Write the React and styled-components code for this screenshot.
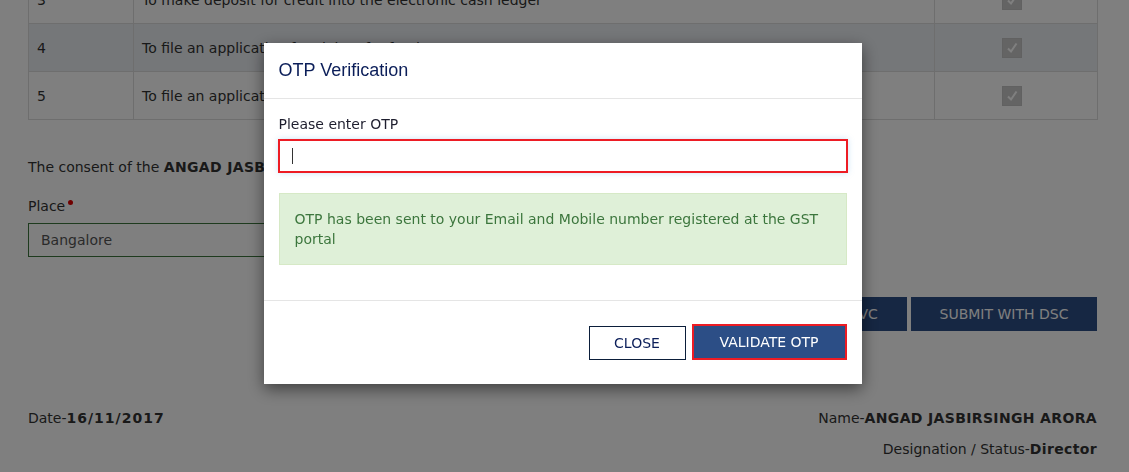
import styled, { createGlobalStyle } from 'styled-components';

const GlobalStyle = createGlobalStyle`
  html, body {
    margin: 0;
    padding: 0;
    background: #fff;
    overflow: hidden;
  }
  body {
    font-family: "DejaVu Sans", Verdana, sans-serif;
    font-size: 14px;
    line-height: 20px;
    color: #333;
  }
`;

const purposes = [
  { id: 3, text: 'To make deposit for credit into the electronic cash ledger' },
  { id: 4, text: 'To file an application for claim of refund', shaded: true },
  { id: 5, text: 'To file an application for cancellation of registration' },
];

const Checked = () => (
  <svg width="20" height="20" viewBox="0 0 20 20">
    <rect x="0.5" y="0.5" width="19" height="19" fill="#c9c9c9" stroke="#c2c2c2" />
    <path d="M6 10.5 L9 13.5 L14.5 5.5" fill="none" stroke="#fff" strokeWidth="2" />
  </svg>
);

const App = () => {
  return (
    <>
      <GlobalStyle />
      <Page>
        <Table>
          <colgroup>
            <col style={{ width: 105 }} />
            <col style={{ width: 801 }} />
            <col style={{ width: 163 }} />
          </colgroup>
          <tbody>
            {purposes.map((p) => (
              <Row key={p.id} $shaded={p.shaded}>
                <Cell>{p.id}</Cell>
                <Cell>{p.text}</Cell>
                <CheckCell>
                  <Checked />
                </CheckCell>
              </Row>
            ))}
          </tbody>
        </Table>

        <Consent>
          The consent of the <Strong>ANGAD JASBIRSINGH ARORA</Strong> is given for the above.
        </Consent>

        <Label>
          Place<Required />
        </Label>
        <PlaceInput defaultValue="Bangalore" readOnly />

        <ActionBar>
          <DarkButton>SUBMIT WITH EVC</DarkButton>
          <DarkButton>SUBMIT WITH DSC</DarkButton>
        </ActionBar>

        <SignRow>
          <span>
            Date-<Strong $spacing="1px">16/11/2017</Strong>
          </span>
          <span>
            Name-<Strong>ANGAD JASBIRSINGH ARORA</Strong>
          </span>
        </SignRow>
        <Designation>
          Designation / Status-<Strong>Director</Strong>
        </Designation>
      </Page>

      <Backdrop>
        <Dialog>
          <Header>
            <Title>OTP Verification</Title>
          </Header>
          <Body>
            <FieldLabel>Please enter OTP</FieldLabel>
            <OtpWrap>
              <OtpInput />
              <Caret />
            </OtpWrap>
            <Alert>
              OTP has been sent to your Email and Mobile number registered at the GST portal
            </Alert>
          </Body>
          <Footer>
            <OutlineButton>CLOSE</OutlineButton>
            <PrimaryButton>VALIDATE OTP</PrimaryButton>
          </Footer>
        </Dialog>
      </Backdrop>
    </>
  );
};

const Page = styled.div`
  margin-top: -25px;
  padding: 0 32px 0 28px;
`;

const Strong = styled.b`
  font-weight: bold;
  letter-spacing: ${(p) => p.$spacing || '0.35px'};
`;

const Table = styled.table`
  width: 1069px;
  border-collapse: collapse;
  table-layout: fixed;
`;

const Row = styled.tr`
  background: ${(p) => (p.$shaded ? '#ebeef3' : '#fff')};
`;

const Cell = styled.td`
  border: 1px solid #dcdcdc;
  height: 47px;
  padding: 0 8px;
  vertical-align: middle;
  white-space: nowrap;
  overflow: hidden;
`;

const CheckCell = styled(Cell)`
  text-align: center;
  padding: 0 16px 0 8px;
  svg {
    display: inline-block;
    vertical-align: middle;
  }
`;

const Consent = styled.p`
  margin: 37px 0 0;
`;

const Label = styled.div`
  margin-top: 19px;
  display: flex;
  align-items: flex-start;
`;

const Required = styled.span`
  width: 5px;
  height: 5px;
  margin: 4px 0 0 3px;
  border-radius: 50%;
  background: #e00000;
`;

const PlaceInput = styled.input`
  display: block;
  box-sizing: border-box;
  margin-top: 7px;
  width: 356px;
  height: 34px;
  padding: 0 12px;
  border: 1px solid #3c763d;
  border-radius: 0;
  font: inherit;
  color: #555;
  background: #fff;
  outline: none;
`;

const ActionBar = styled.div`
  display: flex;
  justify-content: flex-end;
  gap: 4px;
  margin-top: 40px;
`;

const DarkButton = styled.button`
  width: 186px;
  height: 34px;
  padding: 0;
  border: none;
  border-radius: 0;
  background: #2c4e86;
  color: #fff;
  font: inherit;
`;

const SignRow = styled.div`
  display: flex;
  justify-content: space-between;
  margin-top: 77px;
`;

const Designation = styled.div`
  text-align: right;
  margin-top: 11px;
`;

const Backdrop = styled.div`
  position: fixed;
  inset: 0;
  background: rgba(0, 0, 0, 0.5);
`;

const Dialog = styled.div`
  width: 598px;
  margin: 43px auto 0;
  transform: translateX(-2px);
  background: #fff;
  box-shadow: 0 5px 15px rgba(0, 0, 0, 0.5);
`;

const Header = styled.div`
  padding: 14px 15px 15px;
  border-bottom: 1px solid #e5e5e5;
`;

const Title = styled.h4`
  margin: 0;
  font-family: "Liberation Sans", Arial, sans-serif;
  font-size: 18px;
  font-weight: normal;
  line-height: 26px;
  color: #0b1e59;
`;

const Body = styled.div`
  padding: 15px;
`;

const FieldLabel = styled.div`
  color: #1e1e2e;
`;

const OtpWrap = styled.div`
  position: relative;
  margin: 5px 0 20px -1px;
`;

const OtpInput = styled.input`
  display: block;
  box-sizing: border-box;
  width: 570px;
  height: 34px;
  border: 2px solid #ed1c24;
  border-radius: 0;
  box-shadow: 0 0 6px rgba(102, 175, 233, 0.35);
  outline: none;
  font: inherit;
`;

const Caret = styled.span`
  position: absolute;
  left: 14px;
  top: 9px;
  width: 1px;
  height: 16px;
  background: #333;
`;

const Alert = styled.div`
  padding: 15px;
  margin-bottom: 20px;
  background: #dff0d8;
  border: 1px solid #d6e9c6;
  color: #3c763d;
`;

const Footer = styled.div`
  display: flex;
  justify-content: flex-end;
  align-items: center;
  gap: 6px;
  padding: 23px 15px 24px;
  border-top: 1px solid #e5e5e5;
`;

const OutlineButton = styled.button`
  box-sizing: border-box;
  width: 97px;
  height: 34px;
  margin-top: 1px;
  border: 1px solid #0b1e3a;
  border-radius: 0;
  background: #fff;
  color: #0b1e59;
  font: inherit;
`;

const PrimaryButton = styled.button`
  box-sizing: border-box;
  width: 155px;
  height: 36px;
  border: 2px solid #ed1c24;
  border-radius: 0;
  background: #2c4e86;
  color: #fff;
  font: inherit;
`;

export default App;
